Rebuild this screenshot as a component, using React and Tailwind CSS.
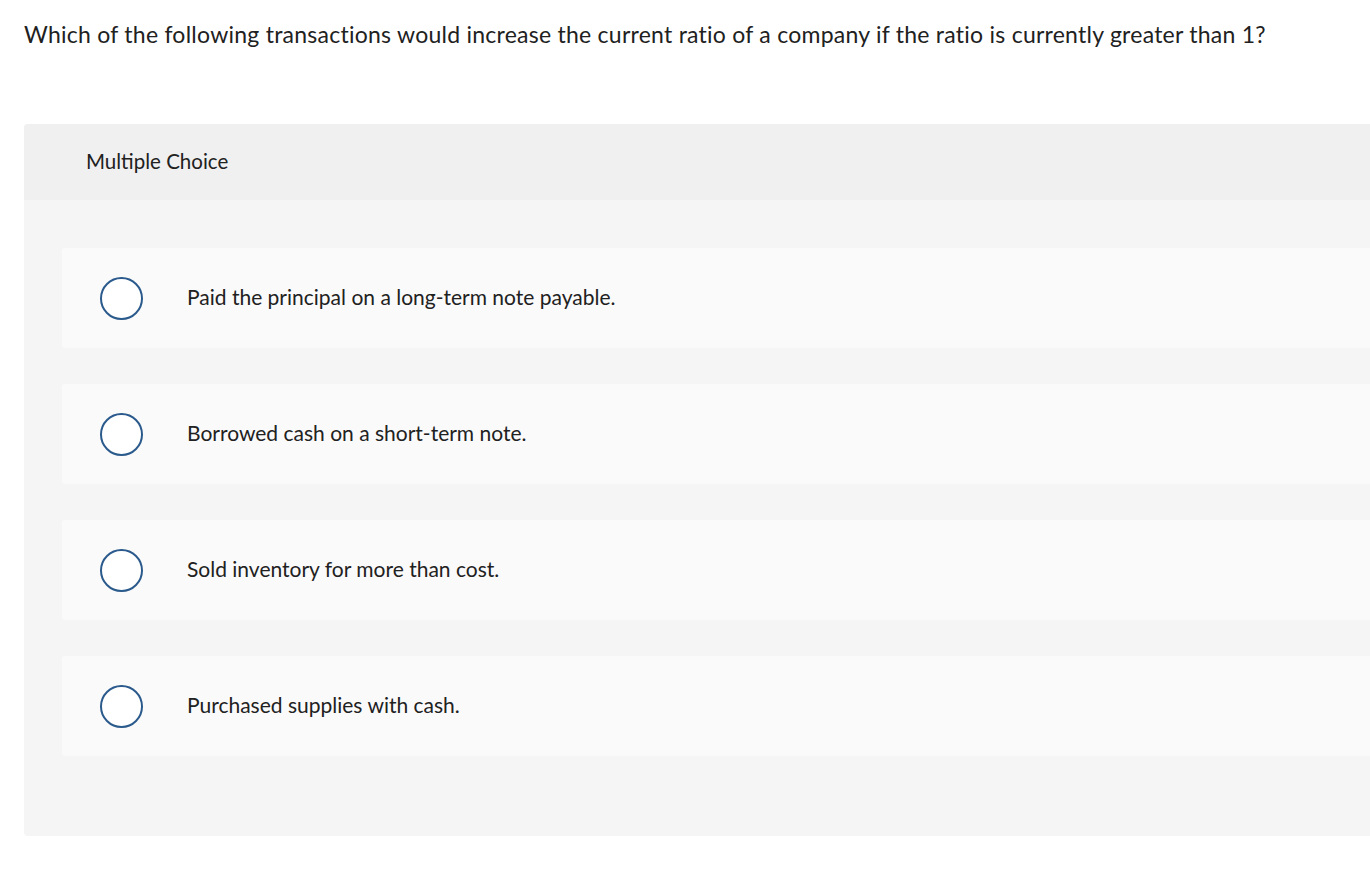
const choices = [
  'Paid the principal on a long-term note payable.',
  'Borrowed cash on a short-term note.',
  'Sold inventory for more than cost.',
  'Purchased supplies with cash.',
];

export default function App() {
  return (
    <div className="min-h-screen w-full overflow-hidden bg-white text-[#212121] font-['Lato','Noto_Sans',sans-serif]">
      <p className="pl-6 pt-[20px] text-[23px] leading-[28px] tracking-[0.25px]">
        Which of the following transactions would increase the current ratio of a company if the ratio is currently greater than 1?
      </p>

      <div className="ml-6 mt-[76px] w-[1400px] rounded-l bg-[#f5f5f5]">
        <div className="flex h-[76px] items-center rounded-tl bg-[#f0f0f0] pl-[62px] pb-px text-[20.5px]">
          Multiple Choice
        </div>

        <div className="flex flex-col gap-9 pt-12 pb-20 pl-[38px]">
          {choices.map(text => (
            <label key={text} className="flex h-[100px] items-center rounded-[3px] bg-[#fafafa]">
              <span className="ml-[38px] h-[43px] w-[43px] shrink-0 rounded-full border-2 border-[#2b5a8c] bg-white" />
              <span className="ml-[44px] pb-0.5 text-[21px]">{text}</span>
            </label>
          ))}
        </div>
      </div>
    </div>
  );
}
